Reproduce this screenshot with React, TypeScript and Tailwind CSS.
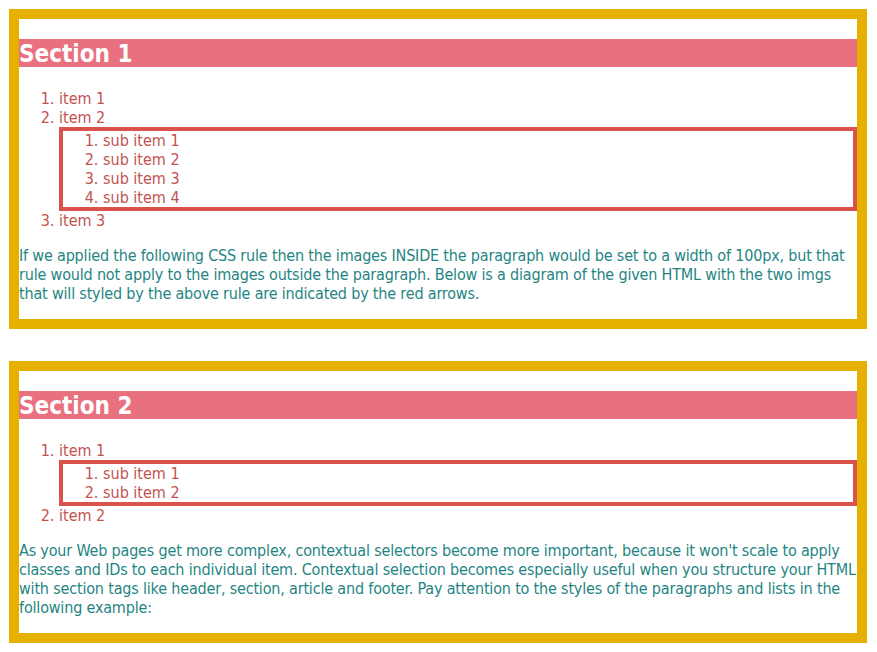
const sections = [
  {
    title: 'Section 1',
    items: [
      { label: 'item 1' },
      { label: 'item 2', sub: ['sub item 1', 'sub item 2', 'sub item 3', 'sub item 4'] },
      { label: 'item 3' },
    ],
    text: 'If we applied the following CSS rule then the images INSIDE the paragraph would be set to a width of 100px, but that rule would not apply to the images outside the paragraph. Below is a diagram of the given HTML with the two imgs that will styled by the above rule are indicated by the red arrows.',
  },
  {
    title: 'Section 2',
    items: [{ label: 'item 1', sub: ['sub item 1', 'sub item 2'] }, { label: 'item 2' }],
    text: "As your Web pages get more complex, contextual selectors become more important, because it won't scale to apply classes and IDs to each individual item. Contextual selection becomes especially useful when you structure your HTML with section tags like header, section, article and footer. Pay attention to the styles of the paragraphs and lists in the following example:",
  },
]

export default function App() {
  return (
    <div className="min-h-[652px] w-[877px] bg-white pl-[9px] pr-[10px] pt-[9px] font-['DejaVu_Sans_Condensed',sans-serif] text-[16px] leading-[19px]">
      <div className="flex flex-col gap-[32px]">
        {sections.map((s) => (
          <section key={s.title} className="border-[10px] border-[#e6b000] bg-white pt-5 pb-4">
            <h2 className="h-[28px] overflow-hidden bg-[#e8707f] text-[24px] font-bold leading-[31px] text-white">
              {s.title}
            </h2>
            <ol className="mt-[22px] list-decimal pl-10 text-[#c25350]">
              {s.items.map((item) => (
                <li key={item.label}>
                  {item.label}
                  {item.sub && (
                    <ol className="list-decimal border-4 border-[#d9524c] pl-10">
                      {item.sub.map((t) => (
                        <li key={t}>{t}</li>
                      ))}
                    </ol>
                  )}
                </li>
              ))}
            </ol>
            <p className="mt-4 tracking-[-0.18px] text-[#1f8583]">{s.text}</p>
          </section>
        ))}
      </div>
    </div>
  )
}
